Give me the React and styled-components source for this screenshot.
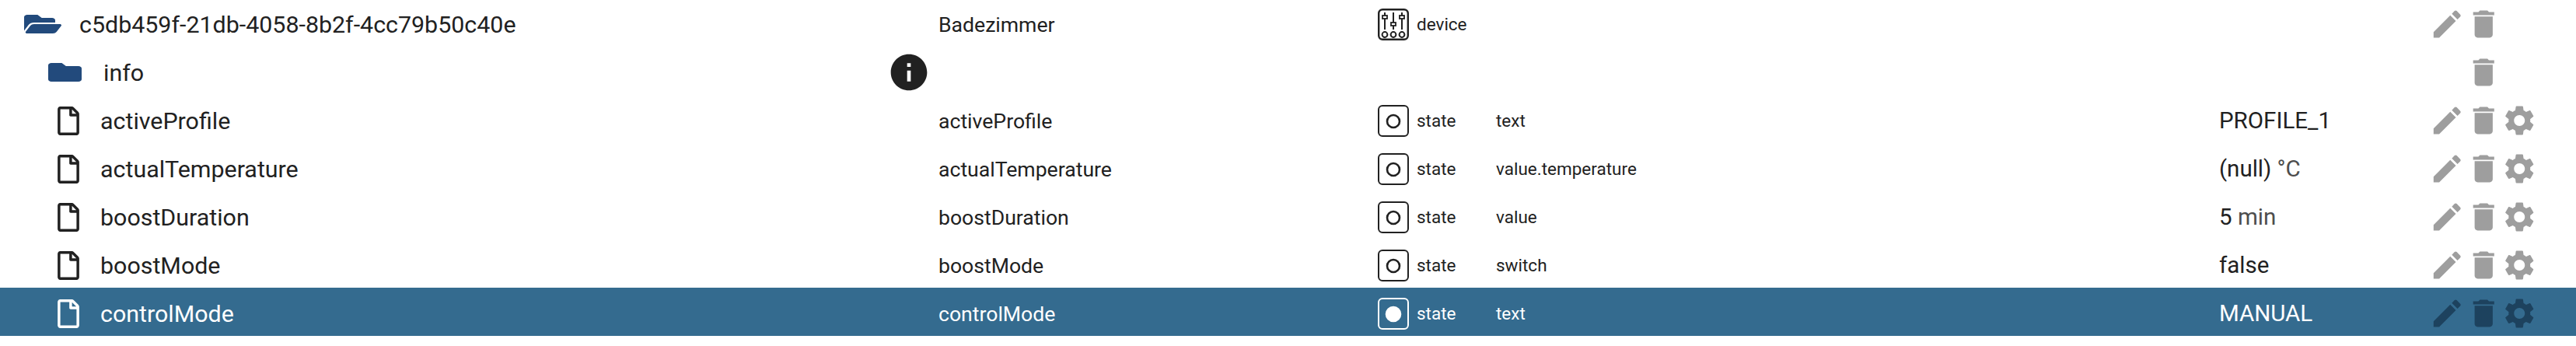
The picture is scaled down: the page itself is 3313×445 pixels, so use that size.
import React from "react";
import styled, { createGlobalStyle } from "styled-components";
import { FaFolder, FaFolderOpen, FaRegFile } from "react-icons/fa";
import { MdDelete, MdEdit, MdInfo, MdSettings } from "react-icons/md";

const GlobalStyle = createGlobalStyle`
  html, body {
    margin: 0;
    height: 445px;
    overflow: hidden;
    background: #fff;
  }
`;

const List = styled.div`
  margin-top: -2px;
  font-family: Roboto, "Open Sans", sans-serif;
  color: #212121;
`;

const Row = styled.div`
  display: grid;
  grid-template-columns: 1207px 565px 50px 102px 930px 1fr;
  align-items: center;
  box-sizing: border-box;
  height: 62px;
  padding-top: 4px;
  background: ${(p) => (p.$selected ? "#346b8f" : "transparent")};
  color: ${(p) => (p.$selected ? "#fff" : "#212121")};
`;

const NameCell = styled.div`
  display: flex;
  align-items: center;
  padding-left: ${(p) => p.$indent}px;
  font-size: 30.4px;
  white-space: nowrap;
`;

const IconSlot = styled.span`
  display: inline-flex;
  justify-content: center;
  align-items: center;
  width: ${(p) => p.$width}px;
  height: 37px;
  margin-right: ${(p) => p.$gap}px;
  color: ${(p) => (p.$folder ? "#224a7c" : "inherit")};
`;

const InfoBadge = styled.span`
  display: inline-flex;
  margin-left: auto;
  margin-right: 10px;
  color: #212121;
`;

const CellText = styled.div`
  font-size: ${(p) => p.$size}px;
  white-space: nowrap;
`;

const ValueText = styled(CellText)`
  width: 270px;
  color: ${(p) => (p.$selected ? "#fff" : "#212121")};
`;

const Unit = styled.span`
  opacity: 0.8;
`;

const TypeIcon = styled.svg`
  display: block;
  width: 40px;
  height: 41px;
  color: inherit;
`;

const Actions = styled.div`
  display: flex;
  align-items: center;
  justify-content: flex-start;
  color: ${(p) => (p.$selected ? "#1d425e" : "#9e9e9e")};
`;

const ActionSlot = styled.span`
  display: inline-flex;
  justify-content: center;
  width: 46.5px;
  height: 48px;
  flex: none;
`;

const DeviceIcon = () => (
  <TypeIcon viewBox="0 0 40 41" fill="none" stroke="currentColor" strokeWidth="2.4">
    <rect x="1.2" y="1.2" width="37.6" height="38.6" rx="5" />
    <path d="M9 5v22M20 5v22M31 5v22" strokeWidth="2" />
    <rect x="6" y="9" width="6" height="4" fill="#fff" strokeWidth="1.8" />
    <rect x="17" y="18" width="6" height="4" fill="#fff" strokeWidth="1.8" />
    <rect x="28" y="9" width="6" height="4" fill="#fff" strokeWidth="1.8" />
    <circle cx="9" cy="33.5" r="3.4" strokeWidth="2" />
    <circle cx="20" cy="33.5" r="3.4" strokeWidth="2" />
    <circle cx="31" cy="33.5" r="3.4" strokeWidth="2" />
  </TypeIcon>
);

const StateIcon = ({ filled }) => (
  <TypeIcon viewBox="0 0 40 41" fill="none" stroke="currentColor" strokeWidth="2">
    <rect x="1" y="1" width="38" height="39" rx="5" />
    <circle cx="20" cy="21" r={filled ? 9 : 8} strokeWidth="2.6" fill={filled ? "currentColor" : "none"} />
  </TypeIcon>
);

const rows = [
  { kind: "open", name: "c5db459f-21db-4058-8b2f-4cc79b50c40e", title: "Badezimmer", role: "device", actions: ["edit", "delete"] },
  { kind: "folder", name: "info", info: true, actions: ["", "delete"] },
  { kind: "file", name: "activeProfile", title: "activeProfile", role: "state", type: "text", value: "PROFILE_1" },
  { kind: "file", name: "actualTemperature", title: "actualTemperature", role: "state", type: "value.temperature", value: "(null)", unit: " °C" },
  { kind: "file", name: "boostDuration", title: "boostDuration", role: "state", type: "value", value: "5", unit: " min" },
  { kind: "file", name: "boostMode", title: "boostMode", role: "state", type: "switch", value: "false" },
  { kind: "file", name: "controlMode", title: "controlMode", role: "state", type: "text", value: "MANUAL", selected: true },
  { kind: "file" },
];

const RowIcon = ({ kind }) => {
  if (kind === "open") {
    return (
      <IconSlot $width={48} $gap={23} $folder>
        <FaFolderOpen size={32} style={{ width: 48, height: 32 }} preserveAspectRatio="none" />
      </IconSlot>
    );
  }
  if (kind === "folder") {
    return (
      <IconSlot $width={43} $gap={28} $folder>
        <FaFolder size={32} style={{ width: 43, height: 32 }} preserveAspectRatio="none" />
      </IconSlot>
    );
  }
  return (
    <IconSlot $width={28} $gap={27}>
      <FaRegFile size={37} />
    </IconSlot>
  );
};

const indents = { open: 31, folder: 62, file: 74 };

const actionIcons = { edit: MdEdit, delete: MdDelete, settings: MdSettings };

const App = () => (
  <List>
    <GlobalStyle />
    {rows.map((row, i) => (
      <Row key={i} $selected={row.selected}>
        <NameCell $indent={indents[row.kind]}>
          <RowIcon kind={row.kind} />
          {row.name}
          {row.info && (
            <InfoBadge>
              <MdInfo size={56} />
            </InfoBadge>
          )}
        </NameCell>
        <CellText $size={26.6}>{row.title}</CellText>
        <div>
          {row.role === "device" && <DeviceIcon />}
          {row.role === "state" && <StateIcon filled={row.selected} />}
        </div>
        <CellText $size={22.5}>{row.role}</CellText>
        <CellText $size={22.5}>{row.type}</CellText>
        <Actions $selected={row.selected}>
          <ValueText $size={29.5} $selected={row.selected}>
            {row.value}
            {row.unit && <Unit>{row.unit}</Unit>}
          </ValueText>
          {(row.actions || (row.name ? ["edit", "delete", "settings"] : [])).map((a, j) => {
            const Icon = actionIcons[a];
            return <ActionSlot key={j}>{Icon && <Icon size={48} />}</ActionSlot>;
          })}
        </Actions>
      </Row>
    ))}
  </List>
);

export default App;
